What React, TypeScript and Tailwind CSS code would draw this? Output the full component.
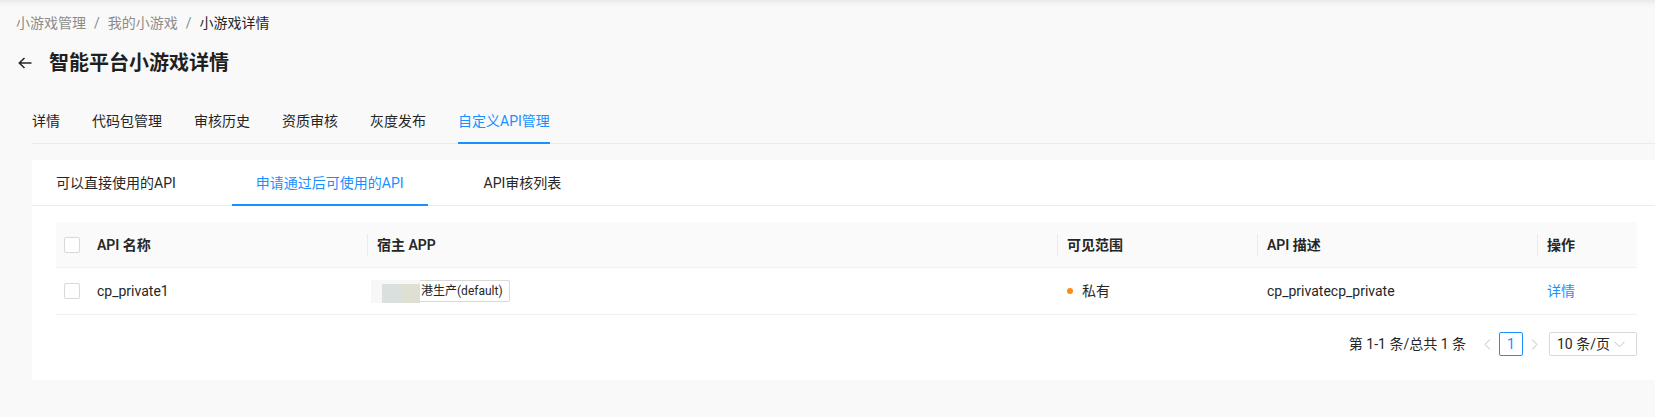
import React from "react";

const outerTabs = ["详情", "代码包管理", "审核历史", "资质审核", "灰度发布", "自定义API管理"];
const innerTabs = ["可以直接使用的API", "申请通过后可使用的API", "API审核列表"];

const columns = [
  { title: "API 名称", sep: true },
  { title: "宿主 APP", sep: true },
  { title: "可见范围", sep: true },
  { title: "API 描述", sep: true },
  { title: "操作", sep: false },
];

function Checkbox() {
  return <span className="block w-4 h-4 rounded-[2px] border border-[#d9d9d9] bg-white" />;
}

export default function App() {
  return (
    <div className="min-h-[417px] bg-[#f9f9f9] font-['Roboto','Noto_Sans_CJK_SC',sans-serif] text-[14px] text-[#262626] shadow-[inset_0_8px_8px_-8px_rgba(0,0,0,0.12)] overflow-hidden">
      {/* Breadcrumb */}
      <div className="flex items-center pl-4 pt-3 leading-[22px]">
        <span className="text-[#8c8c8c]">小游戏管理</span>
        <span className="mx-2 text-[#8c8c8c]">/</span>
        <span className="text-[#8c8c8c]">我的小游戏</span>
        <span className="mx-2 text-[#8c8c8c]">/</span>
        <span className="text-[#262626]">小游戏详情</span>
      </div>

      {/* Title */}
      <div className="flex items-center pl-[18px] mt-[14px] h-[30px]">
        <svg width="14" height="12" viewBox="0 0 14 12" className="mr-[17px]">
          <path d="M13.5 6H1.5M6.5 1 1.3 6l5.2 5" stroke="#262626" strokeWidth="1.5" fill="none" />
        </svg>
        <h1 className="text-[20px] leading-[30px] font-bold text-[#1f1f1f]">智能平台小游戏详情</h1>
      </div>

      {/* Outer tabs */}
      <div className="ml-8 mt-5 flex border-b border-[#ebebeb]">
        {outerTabs.map((t, i) => {
          const active = i === outerTabs.length - 1;
          return (
            <div
              key={t}
              className={`relative mr-8 pt-3 pb-[11px] leading-[22px] ${active ? "text-[#1890ff]" : "text-[#262626]"}`}
            >
              {t}
              {active && <span className="absolute left-0 right-0 bottom-[-1px] h-[2px] bg-[#1890ff]" />}
            </div>
          );
        })}
      </div>

      {/* Card */}
      <div className="ml-8 mt-4 bg-white pb-6">
        <div className="flex gap-8 border-b border-[#ebebeb]">
          {innerTabs.map((t, i) => {
            const active = i === 1;
            return (
              <div
                key={t}
                className={`relative px-6 pt-3 pb-[11px] leading-[22px] ${active ? "text-[#1890ff]" : "text-[#262626]"}`}
              >
                {t}
                {active && <span className="absolute left-0 right-0 bottom-[-1px] h-[2px] bg-[#1890ff]" />}
              </div>
            );
          })}
        </div>

        {/* Table */}
        <div className="ml-6 mr-[18px] mt-4">
          <div className="grid grid-cols-[32px_280px_690px_200px_280px_1fr] bg-[#fafafa] border-b border-[#f0f0f0] h-[46px] items-center">
            <div className="pl-2">
              <Checkbox />
            </div>
            {columns.map((c) => (
              <div key={c.title} className="relative pl-[9px] leading-[22px] font-semibold text-[#262626]">
                {c.title}
                {c.sep && <span className="absolute right-0 top-0 h-[22px] w-px bg-[#ebebeb]" />}
              </div>
            ))}
          </div>

          <div className="grid grid-cols-[32px_280px_690px_200px_280px_1fr] border-b border-[#f0f0f0] h-[47px] items-center">
            <div className="pl-2">
              <Checkbox />
            </div>
            <div className="pl-[9px]">cp_private1</div>
            <div className="pl-[3px] flex items-start">
              <div className="flex flex-col w-[49px] h-[23px]">
                <div className="h-[4px] bg-[#f7f7f7]" />
                <div className="flex flex-1">
                  <div className="w-[11px] bg-[#f7f7f7]" />
                  <div className="w-[20px] bg-[#d9e0de]" />
                  <div className="flex-1 bg-[#dfdfd3]" />
                </div>
              </div>
              <span className="h-[22px] border border-l-0 border-[#d9d9d9] rounded-r-[2px] pl-px pr-[6px] text-[12px] leading-[20px] text-[#262626]">
                港生产(default)
              </span>
            </div>
            <div className="pl-[9px] flex items-center">
              <span className="w-[6px] h-[6px] rounded-full bg-[#fa8c16] mr-[9px]" />
              私有
            </div>
            <div className="pl-[9px]">cp_privatecp_private</div>
            <div className="pl-[9px] text-[#1890ff]">详情</div>
          </div>

          {/* Pagination */}
          <div className="mt-[17px] flex justify-end items-center h-6">
            <span className="mr-[9px]">第 1-1 条/总共 1 条</span>
            <span className="w-6 h-6 flex items-center justify-center">
              <svg width="8" height="11" viewBox="0 0 8 11">
                <path d="M7 0.5 2 5.5l5 5" stroke="#bfbfbf" strokeWidth="1" fill="none" />
              </svg>
            </span>
            <span className="w-6 h-6 flex items-center justify-center border border-[#1890ff] rounded-[2px] text-[#1890ff] bg-white">
              1
            </span>
            <span className="w-6 h-6 flex items-center justify-center">
              <svg width="8" height="11" viewBox="0 0 8 11">
                <path d="M1 0.5 6 5.5l-5 5" stroke="#bfbfbf" strokeWidth="1" fill="none" />
              </svg>
            </span>
            <div className="ml-[2px] w-[88px] h-6 border border-[#d9d9d9] rounded-[2px] flex items-center justify-between pl-[7px] pr-[11px]">
              <span>10 条/页</span>
              <svg width="11" height="7" viewBox="0 0 11 7">
                <path d="M0.5 0.8 5.5 5.8l5-5" stroke="#bfbfbf" strokeWidth="1" fill="none" />
              </svg>
            </div>
          </div>
        </div>
      </div>
    </div>
  );
}
